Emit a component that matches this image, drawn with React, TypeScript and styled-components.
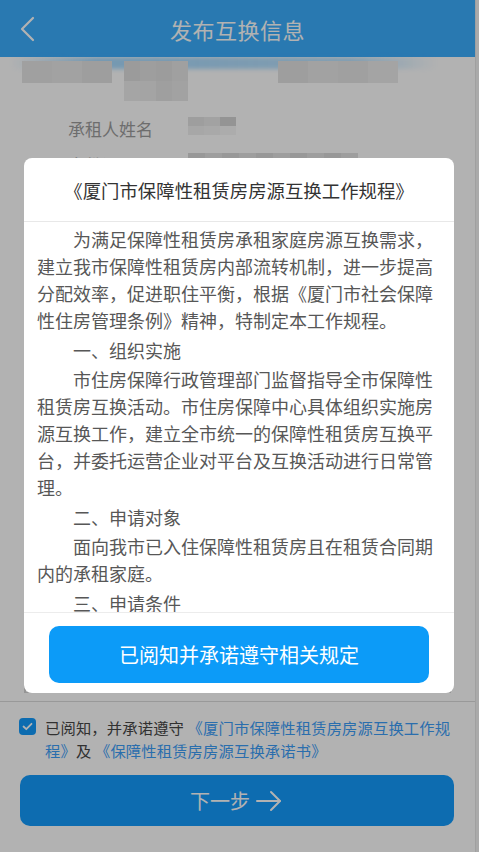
import React from "react";
import styled, { createGlobalStyle } from "styled-components";

const GlobalStyle = createGlobalStyle`
  html, body {
    margin: 0;
    padding: 0;
    background: #ffffff;
    font-family: "Noto Sans CJK SC", "Noto Sans", "Liberation Sans", sans-serif;
    text-spacing-trim: space-all;
  }
  * { box-sizing: border-box; }
`;

const Screen = styled.div`
  display: flex;
  width: 479px;
  height: 852px;
  overflow: hidden;
  position: relative;
`;

const Page = styled.div`
  flex: 1;
  display: flex;
  flex-direction: column;
  background: #ffffff;
`;

const ScrollTrack = styled.div`
  width: 4px;
  background: #f4f4f4;
  border-left: 1px solid #e6e6e6;
`;

const Header = styled.header`
  height: 57px;
  flex: none;
  display: flex;
  align-items: center;
  justify-content: center;
  position: relative;
  background: #3caefe;
  color: #ffffff;
  font-size: 22px;
  letter-spacing: 0.5px;
`;

const BackButton = styled.span`
  position: absolute;
  left: 19px;
  top: 16px;
  display: flex;
`;

const InfoList = styled.div`
  display: flex;
  flex-direction: column;
  padding: 2px 0 0 68px;
`;

const InfoRow = styled.div<{ $h: number }>`
  display: flex;
  align-items: flex-start;
  height: ${(p) => p.$h}px;
  gap: 20px;
`;

const Label = styled.span`
  width: 100px;
  font-size: 17px;
  line-height: 24px;
  color: #9d9d9d;
  white-space: nowrap;
`;

const Mosaic = styled.div<{ $cols: number; $cw: number; $ch: number }>`
  display: grid;
  grid-template-columns: repeat(${(p) => p.$cols}, ${(p) => p.$cw}px);
  grid-auto-rows: ${(p) => p.$ch}px;
  filter: blur(0.6px);
`;

const Cell = styled.div<{ $c: string }>`
  background: ${(p) => p.$c};
`;

const Smear = styled.div`
  height: 12px;
  margin: 0 38px 0 10px;
  border-radius: 10px;
  background: linear-gradient(90deg, rgba(60,174,254,0.0), rgba(60,174,254,0.45) 20%, rgba(60,174,254,0.35) 80%, rgba(60,174,254,0));
  filter: blur(2px);
`;

const TopRow = styled.div`
  display: flex;
  gap: 12px;
  margin-top: -8px;
  padding-left: 22px;
`;

const Spacer = styled.div`
  flex: 1;
`;

const Table = styled.div`
  margin: 0 24px;
  display: grid;
  grid-template-columns: 129px 107px 1fr;
  border: 1px solid #d6d6d6;
  border-top: none;
`;

const TableCell = styled.div`
  height: 46px;
  border-top: 1px solid #d6d6d6;
  & + & { border-left: 1px solid #d6d6d6; }
`;

const Agreement = styled.div`
  margin-top: 8px;
  border-top: 1px solid #dcdcdc;
  padding: 14px 17px 0 19px;
  display: flex;
  gap: 9px;
  align-items: flex-start;
`;

const CheckBox = styled.span`
  flex: none;
  width: 17px;
  height: 17px;
  margin-top: 2px;
  border-radius: 4px;
  background: #139bfd;
  display: flex;
  align-items: center;
  justify-content: center;
`;

const AgreeText = styled.p`
  margin: 0;
  font-size: 15.3px;
  line-height: 23px;
  letter-spacing: 0.15px;
  color: #474747;
`;

const Link = styled.span`
  color: #3d9ef8;
`;

const NextButton = styled.button`
  margin: 13px 21px 26px 20px;
  height: 51px;
  border: none;
  border-radius: 10px;
  background: #139bfd;
  color: #ffffff;
  font-family: inherit;
  font-size: 20px;
  display: flex;
  align-items: center;
  justify-content: center;
  gap: 4px;
  padding: 0;
`;

const Overlay = styled.div`
  position: absolute;
  inset: 0;
  background: rgba(0, 0, 0, 0.3);
`;

const Modal = styled.div`
  position: absolute;
  top: 158px;
  left: 24px;
  width: 430px;
  height: 535px;
  background: #ffffff;
  border-radius: 8px;
  display: flex;
  flex-direction: column;
  overflow: hidden;
`;

const ModalTitle = styled.h2`
  margin: 0;
  height: 64px;
  flex: none;
  display: flex;
  align-items: center;
  justify-content: center;
  font-size: 18.4px;
  font-weight: 400;
  color: #333333;
  border-bottom: 1px solid #e8e8e8;
  white-space: nowrap;
`;

const ModalBody = styled.div`
  flex: 1;
  overflow: hidden;
  padding: 4px 13px 0 13px;
`;

const Para = styled.p`
  margin: 0 0 2.6px;
  font-size: 18px;
  line-height: 27px;
  color: #575757;
  text-indent: 2em;
`;

const ModalFooter = styled.div`
  flex: none;
  border-top: 1px solid #ececec;
  padding: 13px 25px 10px 25px;
`;

const ConfirmButton = styled.button`
  width: 100%;
  height: 57px;
  border: none;
  border-radius: 10px;
  background: #0c9bf8;
  color: #ffffff;
  font-family: inherit;
  font-size: 20px;
  padding: 0;
`;

const paragraphs = [
  "为满足保障性租赁房承租家庭房源互换需求，建立我市保障性租赁房内部流转机制，进一步提高分配效率，促进职住平衡，根据《厦门市社会保障性住房管理条例》精神，特制定本工作规程。",
  "一、组织实施",
  "市住房保障行政管理部门监督指导全市保障性租赁房互换活动。市住房保障中心具体组织实施房源互换工作，建立全市统一的保障性租赁房互换平台，并委托运营企业对平台及互换活动进行日常管理。",
  "二、申请对象",
  "面向我市已入住保障性租赁房且在租赁合同期内的承租家庭。",
  "三、申请条件",
  "承租家庭应当符合保障性租赁房承租条件，且无拖欠租金、物业服务费等情形。",
];

const topMosaic = ["#e6e6e6", "#e9e9e9", "#e3e3e3", "#e8e8e8", "#e5e5e5", "#ebebeb"];
const nameMosaic = ["#e3e3e3", "#e8e8e8", "#d4d4d4", "#f0f0f0", "#f3f3f3", "#f6f6f6"];
const valueMosaic = ["#dedede", "#e2e2e2", "#e0e0e0", "#e6e6e6", "#ececec", "#ebebeb", "#e4e4e4", "#e9e9e9"];

export default function App() {
  return (
    <>
      <GlobalStyle />
      <Screen>
        <Page>
          <Header>
            <BackButton>
              <svg width="16" height="26" viewBox="0 0 16 26" fill="none">
                <polyline points="14,2 3,13 14,24" stroke="#ffffff" strokeWidth="2.2" strokeLinecap="round" strokeLinejoin="round" />
              </svg>
            </BackButton>
            发布互换信息
          </Header>
          <Smear />
          <TopRow>
            <Mosaic $cols={3} $cw={30} $ch={22}>
              {topMosaic.slice(0, 3).map((c, i) => (
                <Cell key={i} $c={c} />
              ))}
            </Mosaic>
            <Mosaic $cols={4} $cw={16} $ch={20}>
              {valueMosaic.map((c, i) => (
                <Cell key={i} $c={c} />
              ))}
            </Mosaic>
            <Spacer />
            <Mosaic $cols={4} $cw={30} $ch={22}>
              {[...topMosaic.slice(2), "#ececec", "#e7e7e7"].slice(0, 4).map((c, i) => (
                <Cell key={i} $c={c} />
              ))}
            </Mosaic>
            <Spacer />
          </TopRow>
          <InfoList>
            <InfoRow $h={14} />
            <InfoRow $h={36}>
              <Label>承租人姓名</Label>
              <Mosaic $cols={3} $cw={16} $ch={9}>
                {nameMosaic.map((c, i) => (
                  <Cell key={i} $c={c} />
                ))}
              </Mosaic>
            </InfoRow>
            <InfoRow $h={36}>
              <Label>身份证号码</Label>
              <Mosaic $cols={10} $cw={17} $ch={12}>
                {Array.from({ length: 10 }).map((_, i) => (
                  <Cell key={i} $c={i % 2 ? "#e2e2e2" : "#dadada"} />
                ))}
              </Mosaic>
            </InfoRow>
          </InfoList>
          <Spacer />
          <Table>
            {Array.from({ length: 6 }).map((_, i) => (
              <TableCell key={i} />
            ))}
          </Table>
          <Agreement>
            <CheckBox>
              <svg width="11" height="9" viewBox="0 0 11 9" fill="none">
                <polyline points="1.5,4.5 4.3,7.2 9.5,1.8" stroke="#ffffff" strokeWidth="1.8" strokeLinecap="round" strokeLinejoin="round" />
              </svg>
            </CheckBox>
            <AgreeText>
              已阅知，并承诺遵守 <Link>《厦门市保障性租赁房房源互换工作规<br />程》</Link>及 <Link>《保障性租赁房房源互换承诺书》</Link>
            </AgreeText>
          </Agreement>
          <NextButton>
            下一步
            <svg width="30" height="24" viewBox="0 0 30 24" fill="none">
              <line x1="3" y1="12" x2="26" y2="12" stroke="#ffffff" strokeWidth="2" strokeLinecap="round" />
              <polyline points="17,3 26,12 17,21" stroke="#ffffff" strokeWidth="2" strokeLinecap="round" strokeLinejoin="round" />
            </svg>
          </NextButton>
        </Page>
        <ScrollTrack />
        <Overlay />
        <Modal>
          <ModalTitle>《厦门市保障性租赁房房源互换工作规程》</ModalTitle>
          <ModalBody>
            {paragraphs.map((p, i) => (
              <Para key={i}>{p}</Para>
            ))}
          </ModalBody>
          <ModalFooter>
            <ConfirmButton>已阅知并承诺遵守相关规定</ConfirmButton>
          </ModalFooter>
        </Modal>
      </Screen>
    </>
  );
}
